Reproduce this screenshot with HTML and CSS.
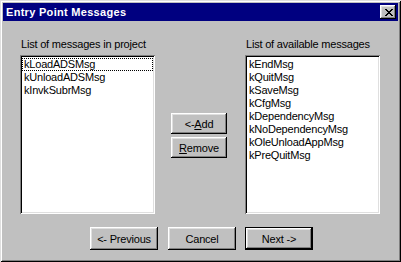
FILE: index.html
```html
<!DOCTYPE html>
<html>
    <head>
        <meta charset="UTF-8">
        <title>Entry Point Messages</title>
        <link rel="stylesheet" href="styles.css">
    </head>
    <body>
        <div class="window">
            <div class="titlebar">
                <span class="title">Entry Point Messages</span>
                <button class="close">
                    <svg width="8" height="7" viewBox="0 0 8 7"><path d="M0 0h2v1h1v1h2v-1h1v-1h2v1h-1v1h-1v1h-1v1h1v1h1v1h1v1h-2v-1h-1v-1h-2v1h-1v1h-2v-1h1v-1h1v-1h1v-1h-1v-1h-1v-1h-1z" fill="#000"/></svg>
                </button>
            </div>
            <div class="body">
                <div class="lists">
                    <div class="col">
                        <div class="label">List of messages in project</div>
                        <ul class="listbox">
                            <li class="focus">kLoadADSMsg</li>
                            <li>kUnloadADSMsg</li>
                            <li>kInvkSubrMsg</li>
                        </ul>
                    </div>
                    <div class="mid">
                        <button class="btn small">&lt;-<u>A</u>dd</button>
                        <button class="btn small"><u>R</u>emove</button>
                    </div>
                    <div class="col">
                        <div class="label">List of available messages</div>
                        <ul class="listbox">
                            <li>kEndMsg</li>
                            <li>kQuitMsg</li>
                            <li>kSaveMsg</li>
                            <li>kCfgMsg</li>
                            <li>kDependencyMsg</li>
                            <li>kNoDependencyMsg</li>
                            <li>kOleUnloadAppMsg</li>
                            <li>kPreQuitMsg</li>
                        </ul>
                    </div>
                </div>
                <div class="footer">
                    <button class="btn wide">&lt;- Previous</button>
                    <button class="btn wide">Cancel</button>
                    <button class="btn wide default">Next -&gt;</button>
                </div>
            </div>
        </div>
    </body>
</html>
```

FILE: styles.css
```css
* { margin: 0; padding: 0; box-sizing: border-box; }
html, body { width: 401px; height: 262px; background: #c0c0c0; font-family: "Liberation Sans", Arial, sans-serif; font-size: 11px; color: #000; letter-spacing: -0.2px; }
ul, li { list-style-type: none; }

.window { width: 401px; height: 262px; padding: 3px; background: #c0c0c0;
    box-shadow: inset 1px 1px #dfdfdf, inset -1px -1px #000, inset 2px 2px #fff, inset -2px -2px #808080; }

.titlebar { height: 18px; background: #000080; display: flex; align-items: flex-start; justify-content: space-between; padding-left: 3px; }
.title { color: #fff; font-weight: bold; line-height: 18px; letter-spacing: 0.3px; }
.close { width: 16px; height: 14px; margin: 2px 2px 0 0; border: none; background: #c0c0c0; display: flex; align-items: center; justify-content: center; padding-left: 1px;
    box-shadow: inset -1px -1px #000, inset 1px 1px #fff, inset -2px -2px #808080, inset 2px 2px #dfdfdf; }
.close svg { display: block; }

.body { padding: 17px 0 0 17px; }
.lists { display: flex; }
.col { width: 135px; }
.label { line-height: 13px; height: 13px; padding-left: 1px; margin-bottom: 4px; }
.listbox { width: 135px; height: 159px; background: #fff; padding: 3px 2px 2px 2px;
    box-shadow: inset 1px 1px #808080, inset -1px -1px #fff, inset 2px 2px #000, inset -2px -2px #dfdfdf; }
.listbox li { height: 13px; line-height: 13px; padding-left: 2px; white-space: nowrap; }
.listbox li.focus { outline: 1px dotted #000; outline-offset: -1px; }

.mid { width: 56px; margin: 0 18px 0 16px; padding-top: 75px; display: flex; flex-direction: column; gap: 3px; }

.btn { font-family: inherit; font-size: 11px; letter-spacing: -0.2px; color: #000; background: #c0c0c0; border: none;
    box-shadow: inset -1px -1px #000, inset 1px 1px #fff, inset -2px -2px #808080, inset 2px 2px #dfdfdf; }
.btn.small { width: 56px; height: 21px; }
.btn.wide { width: 68px; height: 23px; }
.btn.default { box-shadow: inset 0 0 0 1px #000, inset -2px -2px #000, inset 2px 2px #fff, inset -3px -3px #808080, inset 3px 3px #dfdfdf; }

.footer { display: flex; gap: 10px; margin-top: 13px; padding-left: 70px; }
.footer .default { margin-left: -1px; }
```
